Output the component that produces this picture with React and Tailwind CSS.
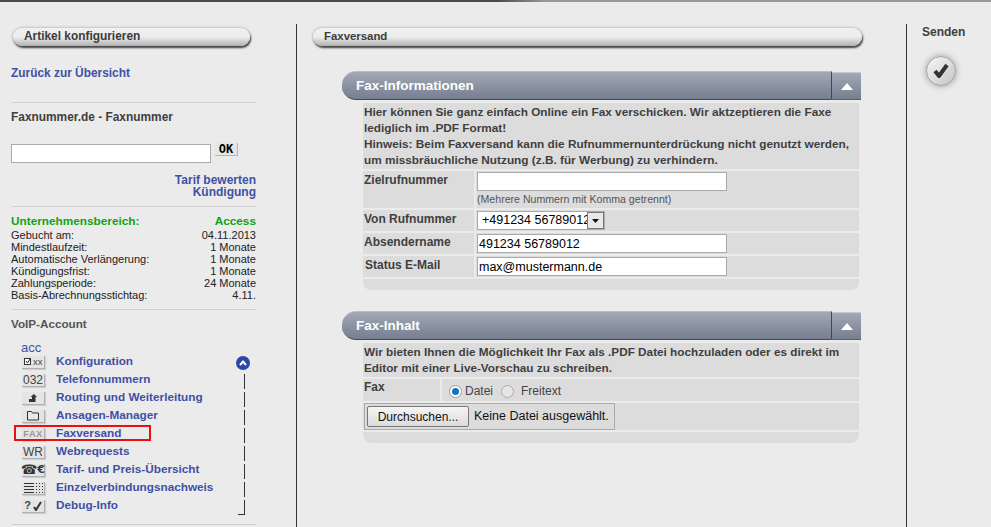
import React from "react";

const Cap = ({ children, cls = "" }) => (
  <span className={`w-[23px] h-[13px] mt-[2px] shrink-0 flex items-center justify-center bg-[#e4e4e4] border-r border-b border-[#b0b0b0] shadow-[1px_1px_1px_#cfcfcf] text-[#444] leading-none ${cls}`}>
    {children}
  </span>
);

const menu = [
  ["Konfiguration", <Cap><svg width="21" height="11" viewBox="0 0 21 11"><rect x="1.5" y="2.5" width="6" height="6" fill="#fff" stroke="#333"/><path d="M3 5l1.500 2 2.500-4" stroke="#222" fill="none"/><text x="10" y="9" fontSize="9.500" fill="#444" fontFamily="Liberation Sans">xx</text></svg></Cap>],
  ["Telefonnummern", <Cap cls="text-[12px]">032</Cap>],
  ["Routing und Weiterleitung", <Cap><svg width="8" height="8" viewBox="0 0 8 8"><path d="M0 8V5h3V3H1.500L5 0l3 3H6.500v5z" fill="#333"/></svg></Cap>],
  ["Ansagen-Manager", <Cap><svg width="14" height="11" viewBox="0 0 14 11"><path d="M1.500 10V1.500h4l1 1.500h6v7z" fill="#e8e8e8" stroke="#333"/></svg></Cap>],
  ["Faxversand", <Cap cls="text-[9.500px] font-bold text-[#999] tracking-[0.3px]">FAX</Cap>],
  ["Webrequests", <Cap cls="text-[12px]">WR</Cap>],
  ["Tarif- und Preis-Übersicht", <Cap cls="font-['DejaVu_Sans','Liberation_Sans',sans-serif]"><span className="text-[13px] text-[#333]">☎</span><span className="text-[11px] font-bold text-[#333]">€</span></Cap>],
  ["Einzelverbindungsnachweis", <Cap><svg width="19" height="10" viewBox="0 0 19 10" fill="#333"><path d="M0 0h10v1H0zM0 3h10v1H0zM0 6h10v1H0zM0 9h10v1H0z"/><path d="M12 0h1v1h-1zM15 0h1v1h-1zM18 0h1v1h-1zM12 3h1v1h-1zM15 3h1v1h-1zM18 3h1v1h-1zM12 6h1v1h-1zM15 6h1v1h-1zM18 6h1v1h-1zM12 9h1v1h-1zM15 9h1v1h-1zM18 9h1v1h-1z"/></svg></Cap>],
  ["Debug-Info", <Cap cls="text-[11px] font-bold gap-[2px]">?<svg width="9" height="10" viewBox="0 0 9 10"><path d="M1 6l2 3 5-8" stroke="#333" strokeWidth="2" fill="none"/></svg></Cap>],
];

const info = [
  ["Gebucht am:", "04.11.2013"],
  ["Mindestlaufzeit:", "1 Monate"],
  ["Automatische Verlängerung:", "1 Monate"],
  ["Kündigungsfrist:", "1 Monate"],
  ["Zahlungsperiode:", "24 Monate"],
  ["Basis-Abrechnungsstichtag:", "4.11."],
];

const Pill = ({ children, cls = "" }) => (
  <div className={`h-[18px] rounded-[9px] pl-[11px] flex items-center font-bold text-[#3c3c3c] bg-gradient-to-b from-[#f0f0f0] via-[#ececec] to-[#b0b0b0] shadow-[1px_2px_2px_#444,0_0_3px_#999] ${cls}`}>
    {children}
  </div>
);

const Hr = ({ cls = "" }) => <div className={`h-px bg-[#cfcfcf] ml-[1px] ${cls}`} />;

const Header = ({ title, cls = "" }) => (
  <div className={`flex ${cls}`}>
    <div className="w-[490px] h-[29px] rounded-l-[14px] pl-[14px] pt-[1px] flex items-center bg-gradient-to-b from-[#a2a9b5] to-[#767f90] border-t border-[#b8bdc6] border-b border-b-[#444b58] border-r border-r-[#3f4652] text-white font-bold text-[13.500px]">
      {title}
    </div>
    <div className="w-[29px] h-[28px] mt-[1px] flex items-center justify-center bg-gradient-to-b from-[#a2a9b5] to-[#767f90] border-t border-[#c5c9d0] border-b-[#586070] border-b">
      <svg width="12" height="7" viewBox="0 0 12 7"><path d="M6 0l6 7H0z" fill="#fff" /></svg>
    </div>
  </div>
);

const Label = ({ children, w = "w-[111px]", cls = "" }) => (
  <div className={`${w} shrink-0 bg-[#dcdcdc] pl-[1px] text-[12px] font-bold text-[#3f3f3f] leading-[14px] ${cls}`}>{children}</div>
);

const Field = ({ value = "" }) => (
  <input readOnly value={value} className="block w-[250px] h-[19px] bg-white border border-[#aaa] pl-[1px] text-[12.500px] text-black outline-none" />
);

export default function App() {
  return (
    <div className="w-[991px] h-[527px] overflow-hidden bg-[#ebebeb] font-['Liberation_Sans',Arial,sans-serif] relative">
      <div className="h-[2px] bg-gradient-to-r from-[#4a4a4a] via-[#4a4a4a] via-50% to-[#999] to-55%" />
      <div className="flex h-[525px]">
        {/* Left */}
        <aside className="w-[296px] shrink-0 pl-[11px] pr-[40px] pt-[26px]">
          <Pill cls="ml-[2px] w-[237px] text-[11.900px]">Artikel konfigurieren</Pill>
          <a className="block mt-[20px] text-[11.900px] font-bold leading-[14px] text-[#3f50a5]">Zurück zur Übersicht</a>
          <Hr cls="mt-[22px]" />
          <div className="mt-[7px] text-[11.900px] font-bold leading-[14px] text-[#3f3f3f]">Faxnummer.de - Faxnummer</div>
          <div className="flex items-start mt-[20px] gap-[4px]">
            <input readOnly className="block w-[200px] h-[19px] bg-white border border-[#aaa] outline-none" />
            <button className="w-[23px] h-[13px] -mt-px bg-[#e6e6e6] border-r border-b border-[#b5b5b5] text-[12px] font-bold font-['DejaVu_Sans_Mono',monospace] leading-[12px] text-black">OK</button>
          </div>
          <div className="mt-[11px] text-right text-[12px] font-bold leading-[12px] text-[#3f50a5]">
            <div>Tarif bewerten</div>
            <div>Kündigung</div>
          </div>
          <Hr cls="mt-[8px]" />
          <div className="flex justify-between mt-[8px] text-[11.800px] font-bold leading-[13px] text-[#12a312]">
            <span>Unternehmensbereich:</span>
            <span>Access</span>
          </div>
          <div className="mt-[1px]">
            {info.map(([a, b]) => (
              <div key={a} className="flex justify-between text-[11px] leading-[12px] text-[#222]">
                <span>{a}</span>
                <span>{b}</span>
              </div>
            ))}
          </div>
          <Hr cls="mt-[8px]" />
          <div className="mt-[7px] text-[11.700px] font-bold leading-[14px] text-[#555]">VoIP-Account</div>
          <div className="ml-[10px] mt-[11px] h-[10px] text-[13px] leading-[12px] text-[#3f50a5]">acc</div>
          <div className="relative ml-[11px] w-[234px]">
            {menu.map(([t, icon], i) => (
              <div key={t} className="h-[18px] flex items-center">
                {icon}
                <span className="ml-[11px] text-[11.750px] font-bold text-[#3f50a5] leading-[14px]">{t}</span>
                {i === 0 ? (
                  <span className="ml-auto mr-[6px] mt-[4px] w-[14px] h-[14px] rounded-full bg-[#2f45a8] flex items-center justify-center">
                    <svg width="8" height="6" viewBox="0 0 8 6"><path d="M1 5l3-3.500L7 5" stroke="#fff" strokeWidth="2" fill="none" /></svg>
                  </span>
                ) : (
                  <span className="ml-auto mr-[11px] w-px h-[15px] mt-[4px] bg-[#333] relative">
                    {i === menu.length - 1 && <span className="absolute right-0 bottom-0 w-[7px] h-px bg-[#333]" />}
                  </span>
                )}
              </div>
            ))}
            <div className="absolute left-[-8px] top-[73px] w-[137px] h-[16px] border-2 border-[#e81010]" />
          </div>
          <Hr cls="mt-[10px]" />
        </aside>

        {/* Main */}
        <main className="w-[610px] shrink-0 mt-[22px] border-l border-[#333] pl-[16px]">
          <Pill cls="mt-[4px] w-[549px] text-[11.400px]">Faxversand</Pill>

          <section className="ml-[29px] mt-[25px] w-[519px]">
            <Header title="Fax-Informationen" />
            <div className="ml-[21px] w-[496px] mt-[3px] flex flex-col gap-[2px]">
              <div className="bg-[#dcdcdc] h-[66px] pl-[1px] py-[1px] text-[11.800px] font-bold leading-[16px] text-[#3f3f3f]">
                Hier können Sie ganz einfach Online ein Fax verschicken. Wir aktzeptieren die Faxe<br />
                lediglich im .PDF Format!<br />
                Hinweis: Beim Faxversand kann die Rufnummernunterdrückung nicht genutzt werden,<br />
                um missbräuchliche Nutzung (z.B. für Werbung) zu verhindern.
              </div>
              <div className="flex gap-[2px] h-[37px]">
                <Label cls="pt-[2px]">Zielrufnummer</Label>
                <div className="flex-1 bg-[#dcdcdc] pl-[1px] pt-[1px]">
                  <Field />
                  <div className="mt-[2px] text-[10.600px] leading-[12px] text-[#555]">(Mehrere Nummern mit Komma getrennt)</div>
                </div>
              </div>
              <div className="flex gap-[2px] h-[21px]">
                <Label cls="pt-[2px]">Von Rufnummer</Label>
                <div className="flex-1 bg-[#dcdcdc] pl-[1px] pt-[1px]">
                  <div className="w-[128px] h-[19px] bg-white border border-[#aaa] flex items-center overflow-hidden">
                    <span className="pl-[4px] w-[109px] shrink-0 overflow-hidden whitespace-nowrap text-[12.500px] text-black">+491234 56789012</span>
                    <span className="w-[17px] h-[17px] flex items-center justify-center bg-[#e8e8e8] border border-[#777]">
                      <svg width="7" height="4" viewBox="0 0 7 4"><path d="M0 0h7L3.500 4z" fill="#111" /></svg>
                    </span>
                  </div>
                </div>
              </div>
              <div className="flex gap-[2px] h-[21px]">
                <Label cls="pt-[2px]">Absendername</Label>
                <div className="flex-1 bg-[#dcdcdc] pl-[1px] pt-[1px]"><Field value="491234 56789012" /></div>
              </div>
              <div className="flex gap-[2px] h-[21px]">
                <Label cls="pl-[2px] pt-[2px]">Status E-Mail</Label>
                <div className="flex-1 bg-[#dcdcdc] pl-[1px] pt-[1px]"><Field value="max@mustermann.de" /></div>
              </div>
              <div className="h-[11px] bg-[#dcdcdc] rounded-b-[8px]" />
            </div>
          </section>

          <section className="ml-[29px] mt-[21px] w-[519px]">
            <Header title="Fax-Inhalt" />
            <div className="ml-[21px] w-[496px] mt-[3px] flex flex-col gap-[2px]">
              <div className="bg-[#dcdcdc] h-[34px] pl-[1px] py-[1px] text-[11.750px] font-bold leading-[16px] text-[#3f3f3f]">
                Wir bieten Ihnen die Möglichkeit Ihr Fax als .PDF Datei hochzuladen oder es direkt im<br />
                Editor mit einer Live-Vorschau zu schreiben.
              </div>
              <div className="flex gap-[2px] h-[22px]">
                <Label w="w-[77px]" cls="pt-[1px]">Fax</Label>
                <div className="flex-1 bg-[#dcdcdc] flex items-center pl-[7px] pt-[2px] text-[12px] text-[#444]">
                  <span className="w-[13px] h-[13px] rounded-full border border-[#999] bg-white flex items-center justify-center">
                    <span className="w-[7px] h-[7px] rounded-full bg-[#1474b8]" />
                  </span>
                  <span className="ml-[3px]">Datei</span>
                  <span className="ml-[8px] w-[13px] h-[13px] rounded-full border border-[#aaa] bg-[#e6e6e6]" />
                  <span className="ml-[7px]">Freitext</span>
                </div>
              </div>
              <div className="bg-[#dcdcdc] h-[27px] flex items-center pl-[1px]">
                <div className="h-[27px] w-[251px] border border-[#aaa] flex items-center pl-[2px]">
                  <button className="w-[102px] h-[21px] rounded-[2px] border border-[#777] bg-gradient-to-b from-[#f5f5f5] to-[#dcdcdc] text-[12px] text-[#111]">Durchsuchen...</button>
                  <span className="ml-[5px] text-[12.500px] text-[#111] whitespace-nowrap">Keine Datei ausgewählt.</span>
                </div>
              </div>
              <div className="h-[11px] bg-[#dcdcdc] rounded-b-[8px]" />
            </div>
          </section>
        </main>

        {/* Right */}
        <aside className="flex-1 mt-[22px] border-l border-[#333] pl-[15px] pt-[1px]">
          <div className="text-[12px] font-bold leading-[14px] text-[#3f3f3f]">Senden</div>
          <div className="mt-[17px] ml-[4px] w-[30px] h-[30px] rounded-full flex items-center justify-center bg-gradient-to-br from-[#f8f8f8] to-[#c4c4c4] border border-[#a0a0a0] shadow-[0_0_6px_#999]">
            <svg width="18" height="16" viewBox="0 0 18 16"><path d="M3 8l4 5 8-11" stroke="#333" strokeWidth="4" fill="none" strokeLinejoin="round" /></svg>
          </div>
        </aside>
      </div>
    </div>
  );
}
